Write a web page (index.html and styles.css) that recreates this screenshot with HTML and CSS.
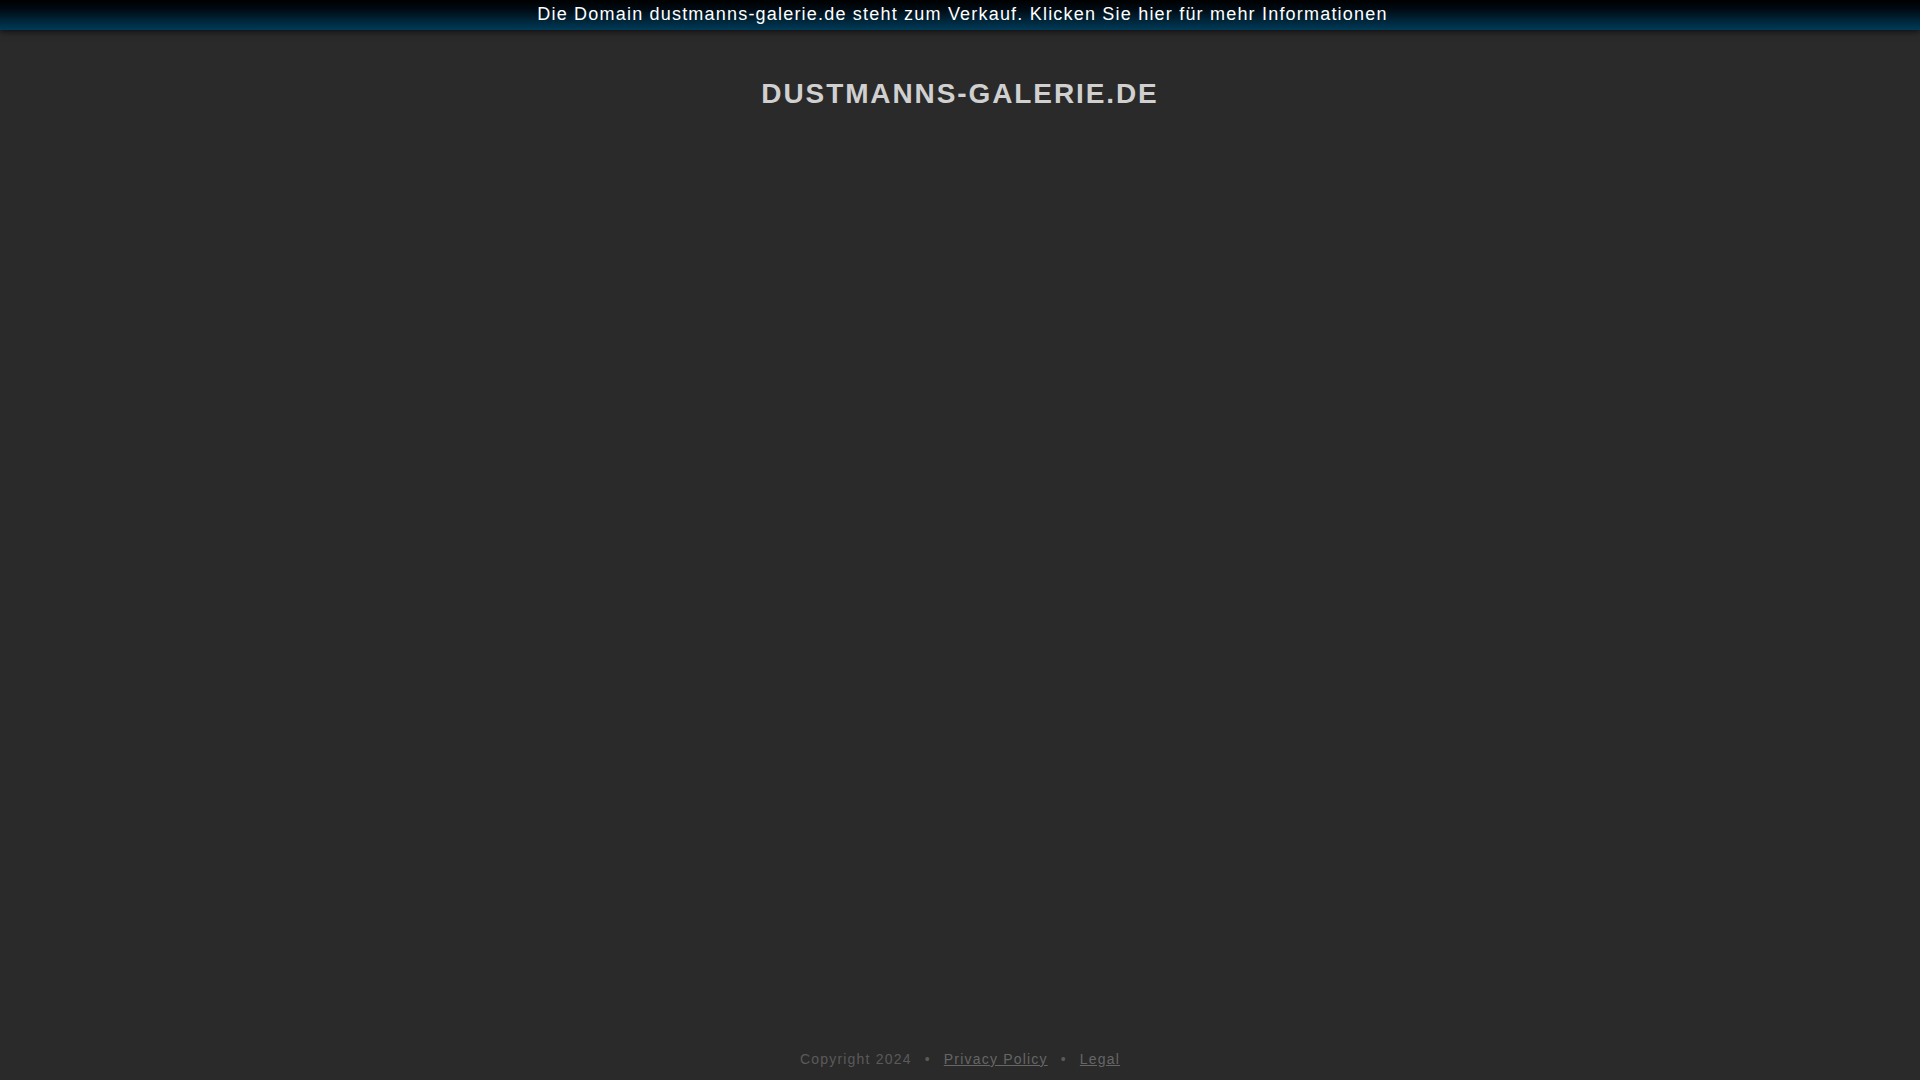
FILE: index.html
```html
<!DOCTYPE html>
<html lang="de">
<head>
<meta charset="utf-8">
<title>dustmanns-galerie.de</title>
<link rel="stylesheet" href="styles.css">
</head>
<body>
<div class="topbar"><a class="sale" href="#">Die Domain dustmanns-galerie.de steht zum Verkauf. Klicken Sie hier für mehr Informationen</a></div>
<main class="main">
<h1 class="title">DUSTMANNS-GALERIE.DE</h1>
</main>
<footer class="footer">
<span class="copy">Copyright 2024</span>
<span class="dot">•</span>
<a class="flink" href="#">Privacy Policy</a>
<span class="dot">•</span>
<a class="flink" href="#">Legal</a>
</footer>
</body>
</html>
```
FILE: styles.css
```css
html, body {
  margin: 0;
  padding: 0;
  height: 100%;
}
body {
  background: #2a2a2a;
  font-family: "Liberation Sans", Arial, sans-serif;
  display: flex;
  flex-direction: column;
  min-height: 100vh;
}
.topbar {
  height: 30px;
  padding: 0 0 2px 5px;
  box-sizing: border-box;
  background: linear-gradient(to bottom, #000000 0%, #000a12 30%, #002a40 75%, #003a58 100%);
  box-shadow: 0 2px 6px rgba(0,0,0,0.6);
  display: flex;
  justify-content: center;
  align-items: center;
  position: relative;
  z-index: 1;
}
.sale {
  color: #ffffff;
  text-decoration: none;
  font-size: 18px;
  letter-spacing: 1.2px;
  font-family: "Liberation Sans", Arial, sans-serif;
}
.main {
  flex: 1;
  display: flex;
  flex-direction: column;
  align-items: center;
}
.title {
  margin: 47px 0 0 0;
  font-size: 28px;
  font-weight: bold;
  letter-spacing: 1.9px;
  color: #d0d0d0;
  line-height: 34px;
}
.footer {
  display: flex;
  justify-content: center;
  align-items: center;
  gap: 13px;
  padding-bottom: 6px;
  height: 30px;
  font-size: 14px;
  letter-spacing: 1.2px;
  color: #5a5a5a;
}
.flink {
  color: #666666;
  text-decoration: underline;
}
.dot {
  color: #5a5a5a;
  font-size: 14px;
}
```
